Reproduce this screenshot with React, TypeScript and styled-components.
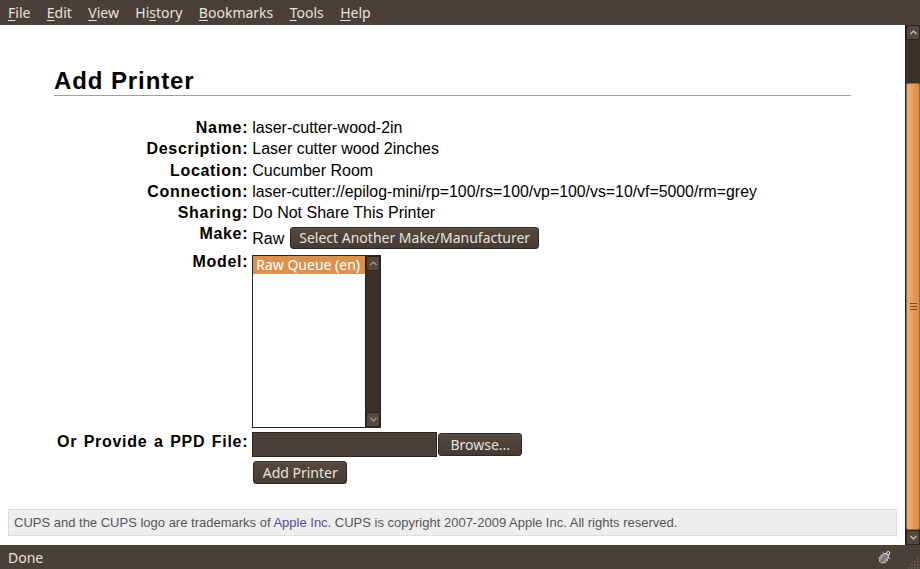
import React from "react";
import styled, { createGlobalStyle } from "styled-components";

const GlobalStyle = createGlobalStyle`
  html, body { margin: 0; padding: 0; overflow: hidden; background: #fff; }
  #root { width: 920px; height: 569px; }
`;

const UI_FONT = `"Noto Sans", "DejaVu Sans", sans-serif`;
const PAGE_FONT = `"Liberation Sans", Arial, sans-serif`;
const DARK = "#4b4037";
const LIGHT_TEXT = "#e9e2da";

const Window = styled.div`
  width: 920px;
  height: 569px;
  display: flex;
  flex-direction: column;
  overflow: hidden;
`;

const MenuBar = styled.div`
  height: 25px;
  flex: none;
  background: ${DARK};
  display: flex;
  align-items: center;
  gap: 16.4px;
  padding-left: 8px;
  font-family: ${UI_FONT};
  font-size: 14px;
  color: ${LIGHT_TEXT};
`;

const MenuItem = styled.span`
  line-height: 25px;
  u { text-decoration: underline; text-underline-offset: 2px; text-decoration-thickness: 1px; }
`;

const Main = styled.div`
  flex: 1;
  display: flex;
  min-height: 0;
`;

const Viewport = styled.div`
  flex: 1;
  background: #fff;
  overflow: hidden;
  padding: 0 8px;
`;

const Section = styled.div`
  margin: 0 46px;
`;

const Heading = styled.h2`
  margin: 42px 0 0;
  font-family: ${PAGE_FONT};
  font-size: 24px;
  line-height: 28px;
  font-weight: bold;
  letter-spacing: 0.9px;
  color: #000;
  border-bottom: 1px solid #a0a0a0;
`;

const Form = styled.div`
  margin-top: 21px;
  display: grid;
  grid-template-columns: auto 1fr;
  column-gap: 4px;
  font-family: ${PAGE_FONT};
  font-size: 16px;
  color: #000;
`;

const Label = styled.div`
  text-align: right;
  font-weight: bold;
  letter-spacing: 0.7px;
  word-spacing: 1.5px;
  padding-left: 3px;
  line-height: 21.3px;
  white-space: nowrap;
`;

const Value = styled.div<{ $pad?: string; $align?: string }>`
  line-height: 21.3px;
  padding: ${(p) => p.$pad ?? "0"};
  display: flex;
  align-items: ${(p) => p.$align ?? "center"};
  gap: 6px;
  white-space: nowrap;
`;

const Connection = styled.span`
  font-size: 15.85px;
`;

const Button = styled.button<{ $w?: number; $h?: number }>`
  font-family: ${UI_FONT};
  font-size: 14px;
  color: ${LIGHT_TEXT};
  background: linear-gradient(#54483f, #463b33);
  border: 1px solid #2e2722;
  border-radius: 3px;
  height: ${(p) => p.$h ?? 22}px;
  width: ${(p) => (p.$w ? `${p.$w}px` : "auto")};
  padding: 0 8px;
  line-height: 18px;
  box-shadow: inset 0 1px 0 rgba(255, 255, 255, 0.08);
`;

const BrowseButton = styled(Button)`
  margin: 1px 0 0 -5px;
`;

const ListBox = styled.div`
  margin: 4px 0 3px;
  width: 129px;
  height: 173px;
  box-sizing: border-box;
  border: 1px solid #2a2420;
  display: flex;
  background: #fff;
`;

const ListItems = styled.div`
  flex: 1;
  display: flex;
  flex-direction: column;
`;

const ListItem = styled.div<{ $selected?: boolean }>`
  height: 18px;
  line-height: 18px;
  padding-left: 3px;
  font-family: ${UI_FONT};
  font-size: 14px;
  color: ${(p) => (p.$selected ? "#fff" : "#000")};
  background: ${(p) => (p.$selected ? "#da9250" : "transparent")};
`;

const Scroll = styled.div<{ $w: number }>`
  width: ${(p) => p.$w}px;
  flex: none;
  display: flex;
  flex-direction: column;
  background: #3a312b;
  border-left: 1px solid #231e1a;
  box-sizing: border-box;
`;

const ScrollBtn = styled.div`
  height: 15px;
  flex: none;
  background: #55493f;
  border: 1px solid #2a231f;
  box-sizing: border-box;
  border-radius: 2px;
  display: flex;
  align-items: center;
  justify-content: center;
`;

const Track = styled.div<{ $h?: number }>`
  flex: ${(p) => (p.$h ? "none" : "1")};
  height: ${(p) => (p.$h ? `${p.$h}px` : "auto")};
`;

const Thumb = styled.div`
  flex: 1;
  background: linear-gradient(90deg, #eead70, #e49a58 60%, #d88b48);
  border: 1px solid #a8652c;
  box-sizing: border-box;
  border-radius: 2px;
  display: flex;
  align-items: center;
  justify-content: center;
`;

const Grip = styled.div`
  width: 7px;
  display: flex;
  flex-direction: column;
  gap: 2px;
  span { height: 1px; background: #7a4519; display: block; }
`;

const FileInput = styled.div`
  width: 185px;
  height: 25px;
  box-sizing: border-box;
  background: ${DARK};
  border: 1px solid #2a231f;
`;

const Footer = styled.div`
  margin-top: 25px;
  border: 1px solid #dcdcdc;
  background: #eeeeee;
  padding: 5px 5px;
  font-family: ${PAGE_FONT};
  font-size: 13px;
  line-height: 15px;
  color: #555;
  a { color: #4d4d9e; text-decoration: none; }
`;

const StatusBar = styled.div`
  height: 24px;
  flex: none;
  background: ${DARK};
  display: flex;
  align-items: center;
  padding-left: 8px;
  font-family: ${UI_FONT};
  font-size: 14px;
  color: ${LIGHT_TEXT};
  position: relative;
`;

const StatusText = styled.span`
  flex: 1;
`;

const BugSlot = styled.div`
  width: 16px;
  height: 16px;
  margin-right: 27px;
  display: flex;
`;

const ResizeGrip = styled.svg`
  position: absolute;
  right: 0;
  bottom: 0;
`;

const Chevron = ({ up, color = "#cfc6bc" }: { up?: boolean; color?: string }) => (
  <svg width="7" height="5" viewBox="0 0 7 5">
    <polyline
      points={up ? "0.5,4 3.5,1 6.5,4" : "0.5,1 3.5,4 6.5,1"}
      fill="none"
      stroke={color}
      strokeWidth="1.2"
    />
  </svg>
);

const Bug = () => (
  <svg width="16" height="16" viewBox="0 0 16 16">
    <g transform="rotate(40 8 8)">
      <line x1="3" y1="6" x2="13" y2="6" stroke="#cfcfcf" strokeWidth="0.8" />
      <line x1="3" y1="9" x2="13" y2="9" stroke="#cfcfcf" strokeWidth="0.8" />
      <line x1="3" y1="12" x2="13" y2="12" stroke="#cfcfcf" strokeWidth="0.8" />
      <ellipse cx="8" cy="9.5" rx="3.6" ry="5.5" fill="#8a8a8a" stroke="#dcdcdc" strokeWidth="0.8" />
      <line x1="8" y1="5" x2="8" y2="15" stroke="#444" strokeWidth="0.8" />
      <circle cx="8" cy="3" r="2" fill="#f2f2f2" />
      <circle cx="8" cy="3" r="1" fill="#222" />
    </g>
  </svg>
);

const menu: Array<[string, number]> = [
  ["File", 0],
  ["Edit", 0],
  ["View", 0],
  ["History", 2],
  ["Bookmarks", 0],
  ["Tools", 0],
  ["Help", 0],
];

export default function App() {
  return (
    <>
      <GlobalStyle />
      <Window>
        <MenuBar>
          {menu.map(([t, i]) => (
            <MenuItem key={t}>
              {t.slice(0, i)}
              <u>{t[i]}</u>
              {t.slice(i + 1)}
            </MenuItem>
          ))}
        </MenuBar>
        <Main>
          <Viewport>
            <Section>
              <Heading>Add Printer</Heading>
              <Form>
                <Label>Name:</Label>
                <Value>laser-cutter-wood-2in</Value>
                <Label>Description:</Label>
                <Value>Laser cutter wood 2inches</Value>
                <Label>Location:</Label>
                <Value>Cucumber Room</Value>
                <Label>Connection:</Label>
                <Value>
                  <Connection>laser-cutter://epilog-mini/rp=100/rs=100/vp=100/vs=10/vf=5000/rm=grey</Connection>
                </Value>
                <Label>Sharing:</Label>
                <Value>Do Not Share This Printer</Value>
                <Label>Make:</Label>
                <Value $pad="4px 0 2px">
                  Raw <Button>Select Another Make/Manufacturer</Button>
                </Value>
                <Label>Model:</Label>
                <Value>
                  <ListBox>
                    <ListItems>
                      <ListItem $selected>Raw Queue (en)</ListItem>
                    </ListItems>
                    <Scroll $w={15}>
                      <ScrollBtn>
                        <Chevron up color="#a89d92" />
                      </ScrollBtn>
                      <Track />
                      <ScrollBtn>
                        <Chevron color="#a89d92" />
                      </ScrollBtn>
                    </Scroll>
                  </ListBox>
                </Value>
                <Label>Or Provide a PPD File:</Label>
                <Value $pad="1px 0 4px" $align="flex-start">
                  <FileInput />
                  <BrowseButton $w={84} $h={23}>
                    Browse...
                  </BrowseButton>
                </Value>
                <div />
                <Value $pad="0 0 0 1px">
                  <Button $w={94} $h={23}>Add Printer</Button>
                </Value>
              </Form>
            </Section>
            <Footer>
              CUPS and the CUPS logo are trademarks of <a href="#">Apple Inc.</a> CUPS is copyright
              2007-2009 Apple Inc. All rights reserved.
            </Footer>
          </Viewport>
          <Scroll $w={15}>
            <ScrollBtn>
              <Chevron up />
            </ScrollBtn>
            <Track $h={43} />
            <Thumb>
              <Grip>
                <span />
                <span />
                <span />
              </Grip>
            </Thumb>
            <ScrollBtn>
              <Chevron />
            </ScrollBtn>
          </Scroll>
        </Main>
        <StatusBar>
          <StatusText>Done</StatusText>
          <BugSlot>
            <Bug />
          </BugSlot>
          <ResizeGrip width="14" height="14" viewBox="0 0 14 14">
            {[
              [11, 3],
              [8, 6],
              [11, 6],
              [5, 9],
              [8, 9],
              [11, 9],
              [2, 12],
              [5, 12],
              [8, 12],
              [11, 12],
            ].map(([x, y]) => (
              <rect key={`${x}-${y}`} x={x} y={y} width="1.5" height="1.5" fill="#6e6157" />
            ))}
          </ResizeGrip>
        </StatusBar>
      </Window>
    </>
  );
}
